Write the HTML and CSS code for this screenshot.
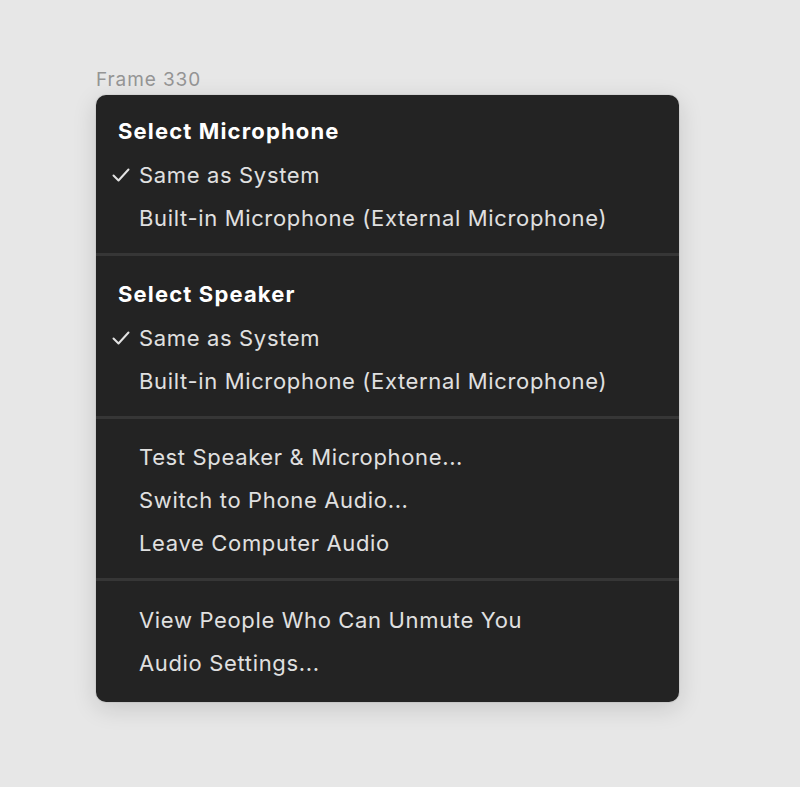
FILE: index.html
```html
<!DOCTYPE html>
<html>
<head>
<meta charset="utf-8">
<link rel="stylesheet" href="styles.css">
</head>
<body>
<div class="frame">
  <div class="frame-label">Frame 330</div>
  <div class="menu">
    <div class="section s1">
      <div class="header">Select Microphone</div>
      <div class="item checked"><svg class="check" width="18" height="14" viewBox="0 0 18 14"><path d="M1.5 7.5 L6.5 12.5 L16.5 1.5" fill="none" stroke="#e2e2e2" stroke-width="2" stroke-linecap="round" stroke-linejoin="round"/></svg>Same as System</div>
      <div class="item">Built-in Microphone (External Microphone)</div>
    </div>
    <div class="sep"></div>
    <div class="section s2">
      <div class="header">Select Speaker</div>
      <div class="item checked"><svg class="check" width="18" height="14" viewBox="0 0 18 14"><path d="M1.5 7.5 L6.5 12.5 L16.5 1.5" fill="none" stroke="#e2e2e2" stroke-width="2" stroke-linecap="round" stroke-linejoin="round"/></svg>Same as System</div>
      <div class="item">Built-in Microphone (External Microphone)</div>
    </div>
    <div class="sep"></div>
    <div class="section s3">
      <div class="item">Test Speaker &amp; Microphone...</div>
      <div class="item">Switch to Phone Audio...</div>
      <div class="item">Leave Computer Audio</div>
    </div>
    <div class="sep"></div>
    <div class="section s4">
      <div class="item">View People Who Can Unmute You</div>
      <div class="item">Audio Settings...</div>
    </div>
  </div>
</div>
</body>
</html>
```
FILE: styles.css
```css
html, body {
  margin: 0;
  padding: 0;
}
body {
  background: #e7e7e7;
  font-family: Inter, "Noto Sans", sans-serif;
  width: 800px;
  height: 787px;
  overflow: hidden;
}
.frame {
  padding: 67px 0 0 96px;
}
.frame-label {
  color: #949494;
  font-size: 19px;
  letter-spacing: 0.9px;
  line-height: 26px;
  margin-bottom: 2px;
}
.menu {
  width: 583px;
  background: #232323;
  border-radius: 10px;
  box-shadow: 0 6px 24px rgba(0, 0, 0, 0.14), 0 0 0 1px rgba(0, 0, 0, 0.05);
  overflow: hidden;
}
.section {
  display: flex;
  flex-direction: column;
}
.s1 { padding: 15px 0 14px; }
.s2 { padding: 17px 0 14px; }
.s3 { padding: 16px 0 14px; }
.s4 { padding: 17px 0 18px; }
.sep {
  height: 3px;
  background: #363636;
}
.header {
  height: 43px;
  line-height: 43px;
  padding-left: 22px;
  color: #ffffff;
  font-weight: 700;
  font-size: 22px;
  letter-spacing: 1.15px;
}
.item {
  position: relative;
  height: 43px;
  line-height: 45px;
  padding-left: 43px;
  color: #e0e0e0;
  font-size: 22px;
  letter-spacing: 0.65px;
}
.check {
  position: absolute;
  left: 16px;
  top: 15px;
}
```
